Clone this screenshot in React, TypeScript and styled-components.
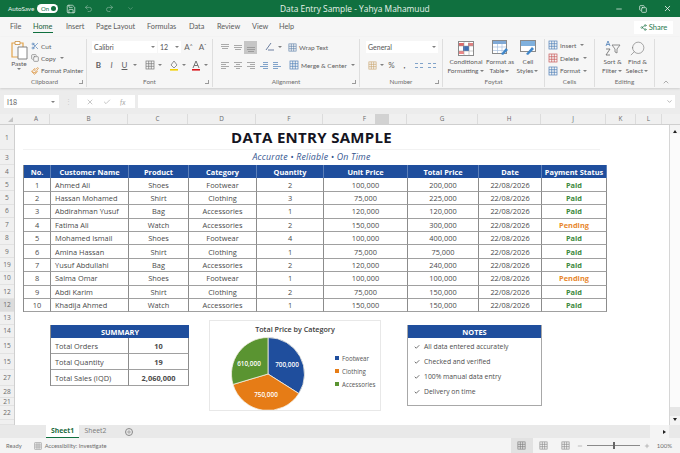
import React from "react";
import styled, { createGlobalStyle } from "styled-components";
import {
  Save, Undo2, Redo2, Minus, X, Share2, Scissors, Copy, Paintbrush, Check, ChevronDown, ChevronUp, Plus, Search,
} from "lucide-react";

const GlobalStyle = createGlobalStyle`
  html, body { margin: 0; padding: 0; background: #fff; }
  body { font-family: "Open Sans", "Liberation Sans", sans-serif; color: #444; }
  * { box-sizing: border-box; }
`;

const uiFont = `"Lato", "Open Sans", sans-serif`;

// Window
const Page = styled.div`
  width: 680px;
  height: 453px;
  overflow: hidden;
  display: flex;
  flex-direction: column;
  background: #ececec;
`;

// Title bar
const TitleBar = styled.div`
  height: 17px;
  flex: none;
  background: #10703f;
  color: #e8f2ec;
  display: flex;
  align-items: center;
  position: relative;
  font-family: ${uiFont};
  font-size: 6.3px;
  padding-left: 8px;
`;

const AutoSaveLabel = styled.span`
  width: 29px;
`;

const Toggle = styled.span`
  width: 21px;
  height: 9px;
  border-radius: 5px;
  background: #fff;
  color: #10703f;
  font-size: 6px;
  display: flex;
  align-items: center;
  justify-content: space-between;
  padding: 0 2px 0 4px;
  margin-right: 7px;
  &::after {
    content: "";
    width: 5px;
    height: 5px;
    border-radius: 50%;
    background: #10703f;
  }
`;

const QuickButton = styled.span<{ $w: number; $dim?: boolean }>`
  width: ${(p) => p.$w}px;
  display: flex;
  align-items: center;
  justify-content: center;
  opacity: ${(p) => (p.$dim ? 0.45 : 1)};
`;

const WindowTitle = styled.span`
  position: absolute;
  left: 280px;
  top: 3px;
  font-family: "Open Sans", sans-serif;
  font-size: 8.4px;
  line-height: 11px;
  white-space: nowrap;
`;

const WindowControls = styled.div`
  margin-left: auto;
  display: flex;
  align-items: center;
  padding-right: 1px;
`;

const WindowButton = styled.span`
  width: 24px;
  display: flex;
  justify-content: center;
`;

// Ribbon tabs
const TabRow = styled.div`
  height: 20px;
  flex: none;
  background: #f6f6f6;
  display: flex;
  align-items: center;
  font-family: ${uiFont};
  font-size: 7.3px;
  color: #5a5a5a;
  padding-left: 10px;
`;

const RibbonTab = styled.span<{ $w: number; $active?: boolean }>`
  width: ${(p) => p.$w}px;
  height: 20px;
  line-height: 20px;
  flex: none;
  white-space: nowrap;
  position: relative;
  color: ${(p) => (p.$active ? "#1f5f3c" : "inherit")};
  &::after {
    content: "";
    display: ${(p) => (p.$active ? "block" : "none")};
    position: absolute;
    left: 0;
    bottom: 4px;
    width: 20px;
    height: 1.5px;
    background: #10703f;
  }
`;

const ShareButton = styled.span`
  margin-left: auto;
  margin-right: 7px;
  width: 39px;
  height: 13px;
  background: #fff;
  color: #2b7a51;
  font-size: 7.6px;
  display: flex;
  align-items: center;
  justify-content: center;
  gap: 2px;
`;

// Ribbon
const Ribbon = styled.div`
  height: 51px;
  flex: none;
  background: #f6f6f6;
  display: flex;
  padding-left: 3px;
  box-shadow: 0 1px 2px #cfcfcf;
  font-family: ${uiFont};
  font-size: 6.5px;
  color: #5c5c5c;
`;

const Group = styled.div<{ $w: number }>`
  width: ${(p) => p.$w}px;
  flex: none;
  display: flex;
  flex-direction: column;
  position: relative;
  border-right: 1px solid #dedede;
  margin: 2px 0 1px;
`;

const GroupBody = styled.div<{ $pl: number; $pt?: number; $row?: boolean; $gap?: number }>`
  flex: 1;
  min-height: 0;
  display: flex;
  flex-direction: ${(p) => (p.$row ? "row" : "column")};
  gap: ${(p) => p.$gap ?? 0}px;
  padding-left: ${(p) => p.$pl}px;
  padding-top: ${(p) => p.$pt ?? 0}px;
`;

const GroupLabel = styled.div`
  height: 10px;
  line-height: 10px;
  text-align: center;
  font-size: 6.4px;
  color: #6e6e6e;
`;

const Launcher = styled.span`
  position: absolute;
  right: 3px;
  bottom: 3px;
  width: 4px;
  height: 4px;
  border-right: 1px solid #9a9a9a;
  border-bottom: 1px solid #9a9a9a;
`;

const ToolRow = styled.div`
  display: flex;
  align-items: center;
  height: 12px;
`;

const Tool = styled.span<{ $ml?: number; $on?: boolean }>`
  width: 13px;
  height: 13px;
  flex: none;
  margin-left: ${(p) => p.$ml ?? 0}px;
  display: flex;
  align-items: center;
  justify-content: center;
  background: ${(p) => (p.$on ? "#c6c6c6" : "transparent")};
  color: #5f5f5f;
  font-size: 8px;
`;

const GrowMark = styled.span`
  font-size: 5px;
  align-self: flex-start;
  margin-top: 2px;
`;

const Caret = styled.span<{ $w?: number }>`
  width: ${(p) => p.$w ?? 8}px;
  flex: none;
  display: flex;
  justify-content: center;
  &::after {
    content: "";
    border-left: 2px solid transparent;
    border-right: 2px solid transparent;
    border-top: 2px solid #808080;
  }
`;

const Field = styled.span<{ $w: number; $ml?: number }>`
  width: ${(p) => p.$w}px;
  height: 12px;
  flex: none;
  margin-left: ${(p) => p.$ml ?? 0}px;
  background: #fff;
  display: flex;
  align-items: center;
  justify-content: space-between;
  padding: 0 1px 0 2px;
  font-size: 7px;
  color: #555;
`;

const InlineTool = styled.span<{ $ml?: number }>`
  display: flex;
  align-items: center;
  gap: 2px;
  flex: none;
  margin-left: ${(p) => p.$ml ?? 0}px;
  white-space: nowrap;
`;

const PasteButton = styled.div`
  width: 24px;
  flex: none;
  display: flex;
  flex-direction: column;
  align-items: center;
  line-height: 8px;
  padding-top: 1px;
`;

const ClipboardList = styled.div`
  display: flex;
  flex-direction: column;
  padding-top: 1px;
`;

const ListRow = styled.div`
  height: 13.4px;
  display: flex;
  align-items: center;
  gap: 2px;
  white-space: nowrap;
`;

const BigButton = styled.div<{ $w: number }>`
  width: ${(p) => p.$w}px;
  flex: none;
  display: flex;
  flex-direction: column;
  align-items: center;
  text-align: center;
  line-height: 9px;
  white-space: nowrap;
`;

const BigIcon = styled.div`
  height: 18px;
  display: flex;
  align-items: center;
`;

const ButtonLine = styled.span`
  display: flex;
  align-items: center;
  height: 9px;
`;

const Collapse = styled.span`
  width: 22px;
  align-self: flex-end;
  display: flex;
  justify-content: center;
  padding-bottom: 2px;
`;

// Formula bar
const FormulaBar = styled.div`
  height: 26px;
  flex: none;
  padding: 7px 5px 6px 4px;
  display: flex;
  font-family: ${uiFont};
  font-size: 7px;
  color: #666;
`;

const NameBox = styled.span`
  width: 55px;
  background: #fff;
  display: flex;
  align-items: center;
  justify-content: space-between;
  padding: 0 3px;
`;

const GripDots = styled.span`
  width: 18px;
  text-align: center;
  color: #ccc;
  line-height: 13px;
`;

const FunctionBox = styled.span`
  width: 58px;
  background: #fff;
  display: flex;
  align-items: center;
  justify-content: space-around;
  color: #aaa;
  padding: 0 5px;
`;

const FormulaInput = styled.span`
  flex: 1;
  margin-left: 3px;
  background: #fff;
  display: flex;
  justify-content: flex-end;
  align-items: center;
  padding-right: 2px;
`;

// Grid
const ColumnHeaderRow = styled.div`
  height: 11px;
  flex: none;
  display: flex;
  background: #f0f0f0;
  border-bottom: 1px solid #cfcfcf;
  padding-right: 10px;
  font-size: 6.4px;
  color: #6a6a6a;
`;

const Corner = styled.span`
  width: 23px;
  flex: none;
  padding: 3px 0 0 8px;
  &::after {
    content: "";
    display: block;
    width: 0;
    height: 0;
    border-left: 5px solid transparent;
    border-bottom: 5px solid #c4c4c4;
  }
`;

const ColumnHead = styled.span<{ $w: number }>`
  width: ${(p) => p.$w}px;
  flex: none;
  position: relative;
  text-align: center;
  line-height: 10px;
  border-right: 1px solid #dcdcdc;
`;

const ColumnBlob = styled.span`
  position: absolute;
  left: 52px;
  top: 0;
  width: 14px;
  height: 10px;
  background: #d2d2d2;
`;

const SheetArea = styled.div`
  height: 300px;
  flex: none;
  display: flex;
`;

const RowHeaders = styled.div`
  width: 15px;
  flex: none;
  background: #f0f0f0;
  border-right: 1px solid #cfcfcf;
  overflow: hidden;
`;

const RowHead = styled.div<{ $on?: boolean }>`
  text-align: center;
  font-size: 6.6px;
  color: #6a6a6a;
  overflow: hidden;
  display: flex;
  align-items: center;
  justify-content: center;
  background: ${(p) => (p.$on ? "#dcdcdc" : "transparent")};
  border-bottom: 1px solid #e2e2e2;
`;

const Sheet = styled.div`
  width: 654px;
  flex: none;
  background: #fff;
  padding-left: 8px;
  color: #444;
`;

const SheetTitle = styled.h1`
  margin: 0;
  width: 577px;
  height: 25px;
  line-height: 25px;
  text-align: center;
  font-size: 15px;
  font-weight: 700;
  letter-spacing: 0.3px;
  color: #15151f;
  font-family: "Open Sans", sans-serif;
  border-bottom: 1px solid #f2f2f2;
`;

const SheetSubtitle = styled.div`
  width: 577px;
  height: 15px;
  line-height: 15px;
  text-align: center;
  font-size: 8.8px;
  font-style: italic;
  letter-spacing: 0.2px;
  color: #34558f;
`;

const DataGrid = styled.div`
  width: 583px;
  display: grid;
  grid-template-columns: 27px 78px 60px 68px 67px 84px 71px 63px 65px;
  grid-auto-rows: 13.4px;
  border-left: 1px solid #8c8c8c;
  font-size: 7.4px;
`;

const HeadCell = styled.div`
  height: 13px;
  background: #1f4e9d;
  color: #fff;
  font-weight: 700;
  font-size: 7.4px;
  display: flex;
  align-items: center;
  justify-content: center;
  white-space: nowrap;
  border-right: 1px solid #5c7fb8;
`;

const Cell = styled.div<{ $left?: boolean; $tone?: string }>`
  display: flex;
  align-items: center;
  justify-content: ${(p) => (p.$left ? "flex-start" : "center")};
  padding-left: ${(p) => (p.$left ? 4 : 0)}px;
  white-space: nowrap;
  border-right: 1px solid #8c8c8c;
  border-bottom: 1px solid #a0a0a0;
  color: ${(p) => p.$tone ?? "#4a4a4a"};
  font-weight: ${(p) => (p.$tone ? 700 : 400)};
`;

const LowerRow = styled.div`
  display: flex;
  align-items: flex-start;
  margin-top: 8px;
  padding-left: 27px;
`;

const SummaryTable = styled.div`
  width: 138px;
  margin-top: 5px;
  flex: none;
  display: grid;
  grid-template-columns: 78px 60px;
  grid-template-rows: 13px repeat(3, 16px);
  border-left: 1px solid #8c8c8c;
  font-size: 7.4px;
`;

const PanelHead = styled.div`
  grid-column: 1 / -1;
  height: 13px;
  background: #1f4e9d;
  color: #fff;
  font-weight: 700;
  font-size: 7.4px;
  display: flex;
  align-items: center;
  justify-content: center;
`;

const SummaryCell = styled.div<{ $bold?: boolean }>`
  display: flex;
  align-items: center;
  justify-content: ${(p) => (p.$bold ? "center" : "flex-start")};
  padding-left: ${(p) => (p.$bold ? 0 : 4)}px;
  border-right: 1px solid #8c8c8c;
  border-bottom: 1px solid #a0a0a0;
  font-weight: ${(p) => (p.$bold ? 700 : 400)};
  color: #4a4a4a;
`;

const ChartCard = styled.div`
  width: 172px;
  height: 91px;
  flex: none;
  margin-left: 21px;
  border: 1px solid #e8e8e8;
  overflow: hidden;
`;

const ChartTitle = styled.div`
  height: 16px;
  line-height: 17px;
  text-align: center;
  font-size: 7.2px;
  font-weight: 600;
  color: #3c3c3c;
`;

const ChartBody = styled.div`
  display: flex;
  align-items: flex-start;
  padding-left: 21px;
`;

const Legend = styled.div`
  margin-left: 30px;
  margin-top: 16px;
  display: flex;
  flex-direction: column;
  gap: 3px;
`;

const LegendItem = styled.div`
  height: 10px;
  display: flex;
  align-items: center;
  gap: 3px;
  font-size: 6.2px;
  color: #555;
`;

const Swatch = styled.span<{ $color: string }>`
  width: 4px;
  height: 4px;
  background: ${(p) => p.$color};
`;

const NotesCard = styled.div`
  width: 135px;
  height: 81px;
  margin-top: 5px;
  margin-left: 26px;
  flex: none;
  border: 1px solid #a8a8a8;
  border-top: none;
`;

const NotesList = styled.ul`
  list-style: none;
  margin: 0;
  padding: 1px 0 0 6px;
`;

const NotesItem = styled.li`
  height: 15px;
  display: flex;
  align-items: center;
  gap: 4px;
  font-size: 6.8px;
  color: #4d4d4d;
`;

const VScroll = styled.div`
  width: 11px;
  flex: none;
  display: flex;
  flex-direction: column;
  background: #e6e6e6;
  border-left: 1px solid #d6d6d6;
`;

const VThumb = styled.div`
  height: 273px;
  background: #fbfbfb;
`;

const ArrowButton = styled.div<{ $dir: "up" | "down" }>`
  height: 9px;
  display: flex;
  align-items: center;
  justify-content: center;
  background: #f4f4f4;
  margin-top: ${(p) => (p.$dir === "down" ? "auto" : 0)};
  &::after {
    content: "";
    border-left: 2px solid transparent;
    border-right: 2px solid transparent;
    border-top: 3px solid ${(p) => (p.$dir === "down" ? "#222" : "transparent")};
    border-bottom: 3px solid ${(p) => (p.$dir === "up" ? "#222" : "transparent")};
  }
`;

// Sheet tabs
const SheetTabs = styled.div`
  height: 13px;
  flex: none;
  background: #e9e9e9;
  display: flex;
  align-items: center;
  padding-left: 46px;
  font-size: 6.8px;
  color: #7a7a7a;
`;

const SheetTab = styled.span<{ $active?: boolean }>`
  width: 33px;
  height: 13px;
  line-height: 12px;
  text-align: center;
  background: ${(p) => (p.$active ? "#fff" : "transparent")};
  color: ${(p) => (p.$active ? "#1c6b40" : "#7a7a7a")};
  font-weight: ${(p) => (p.$active ? 700 : 400)};
  border-bottom: ${(p) => (p.$active ? "1px solid #10703f" : "none")};
`;

const AddSheet = styled.span`
  width: 8px;
  height: 8px;
  margin-left: 13px;
  border-radius: 50%;
  border: 1px solid #8a8a8a;
  display: flex;
  align-items: center;
  justify-content: center;
`;

const HScrollEnd = styled.span`
  margin-left: auto;
  margin-right: 11px;
  width: 19px;
  height: 13px;
  background: #f4f4f4;
  display: flex;
  align-items: center;
  justify-content: flex-end;
  padding-right: 3px;
  &::after {
    content: "";
    border-left: 3px solid #222;
    border-top: 2px solid transparent;
    border-bottom: 2px solid transparent;
  }
`;

// Status bar
const StatusBar = styled.div`
  height: 15px;
  flex: none;
  background: #f4f4f4;
  display: flex;
  align-items: center;
  padding-left: 6px;
  font-family: ${uiFont};
  font-size: 5.8px;
  color: #6d6d6d;
`;

const Accessibility = styled.span`
  margin-left: 12px;
  display: flex;
  align-items: center;
  gap: 3px;
`;

const ViewButton = styled.span<{ $on?: boolean; $first?: boolean }>`
  width: 22px;
  height: 15px;
  margin-left: ${(p) => (p.$first ? "auto" : "0")};
  background: ${(p) => (p.$on ? "#e2e2e2" : "transparent")};
  display: flex;
  align-items: center;
  justify-content: center;
`;

const ZoomSlider = styled.span`
  width: 53px;
  height: 1px;
  margin: 0 4px;
  background: #8a8a8a;
  position: relative;
  &::after {
    content: "";
    position: absolute;
    left: 26px;
    top: -3px;
    width: 2px;
    height: 7px;
    background: #666;
  }
`;

const ZoomText = styled.span`
  margin-left: 7px;
  margin-right: 8px;
  font-size: 6px;
`;

// Drawn icons
type Line = [number, number, number];

function LinesIcon({ lines, color = "#8a8a8a" }: { lines: Line[]; color?: string }) {
  return (
    <svg width="10" height="10" viewBox="0 0 10 10">
      {lines.map(([x1, x2, y]) => (
        <line key={`${x1}${x2}${y}`} x1={x1} x2={x2} y1={y + 0.5} y2={y + 0.5} stroke={color} strokeWidth="0.7" />
      ))}
    </svg>
  );
}

function GridIcon({ size = 10, color = "#777" }: { size?: number; color?: string }) {
  return (
    <svg width={size} height={size} viewBox="0 0 10 10" fill="none" stroke={color} strokeWidth="0.7">
      <rect x="1" y="1" width="8" height="8" />
      <path d="M1 3.7h8M1 6.3h8M3.7 1v8M6.3 1v8" />
    </svg>
  );
}

function PasteIcon() {
  return (
    <svg width="17" height="20" viewBox="0 0 17 20" fill="none">
      <path d="M1 3h11v14H1z" stroke="#e3a34a" strokeWidth="1.2" />
      <path d="M4 1.5h5v3H4z" fill="#fff" stroke="#c98d3c" strokeWidth="0.8" />
      <path d="M7 7h9v12H7z" fill="#fff" stroke="#777" strokeWidth="0.9" />
    </svg>
  );
}

function TableStyleIcon({ variant }: { variant: "cond" | "table" | "cell" }) {
  if (variant === "cond") {
    return (
      <svg width="16" height="15" viewBox="0 0 16 15">
        <rect x="0.5" y="0.5" width="15" height="14" fill="#fff" stroke="#8a8a8a" />
        <rect x="1" y="2" width="5" height="3" fill="#e06a6a" />
        <rect x="5" y="5" width="6" height="5" fill="#3f6fb5" />
        <rect x="1" y="10" width="5" height="3" fill="#e88" />
        <rect x="10" y="2" width="5" height="3" fill="#e08080" />
        <path d="M1 5h14M1 10h14M6 1v13M11 1v13" stroke="#999" strokeWidth="0.5" />
      </svg>
    );
  }
  if (variant === "table") {
    return (
      <svg width="17" height="16" viewBox="0 0 17 16">
        <rect x="0.5" y="0.5" width="14" height="13" fill="#fff" stroke="#8a8a8a" />
        <rect x="1" y="1" width="13" height="3" fill="#7fa9d6" />
        <path d="M1 7h13M1 10.5h13M5.5 4v9M10 4v9" stroke="#a9c2df" strokeWidth="0.7" />
        <path d="M9 14l5-6 2 2-5 5z" fill="#3f86c9" />
      </svg>
    );
  }
  return (
    <svg width="16" height="16" viewBox="0 0 16 16">
      <rect x="0.5" y="0.5" width="15" height="11" fill="#fff" stroke="#8a8a8a" />
      <rect x="1" y="1" width="14" height="5" fill="#7fb0dd" />
      <path d="M6 14l6-7 2 2-6 6z" fill="#3f86c9" />
    </svg>
  );
}

const cols = [
  ["A", 27], ["B", 78], ["C", 60], ["D", 68], ["F", 67], ["F", 84], ["G", 71], ["H", 63], ["J", 65], ["K", 30], ["L", 26],
] as const;

const rowHeads: [string, number, boolean?][] = [
  ["1", 25], ["3", 15], ["4", 13],
  ["5", 13.4], ["5", 13.4], ["6", 13.4], ["7", 13.4], ["8", 13.4], ["9", 13.4], ["19", 13.4], ["10", 13.4], ["12", 13.4], ["12", 13.4, true],
  ["13", 13], ["14", 13], ["15", 16], ["15", 16], ["27", 16], ["28", 12], ["21", 8], ["22", 14], ["", 5],
];

const headers = ["No.", "Customer Name", "Product", "Category", "Quantity", "Unit Price", "Total Price", "Date", "Payment Status"];

const orders = [
  ["1", "Ahmed Ali", "Shoes", "Footwear", "2", "100,000", "200,000", "Paid"],
  ["2", "Hassan Mohamed", "Shirt", "Clothing", "3", "75,000", "225,000", "Paid"],
  ["3", "Abdirahman Yusuf", "Bag", "Accessories", "1", "120,000", "120,000", "Paid"],
  ["4", "Fatima Ali", "Watch", "Accessories", "2", "150,000", "300,000", "Pending"],
  ["5", "Mohamed Ismail", "Shoes", "Footwear", "4", "100,000", "400,000", "Paid"],
  ["6", "Amina Hassan", "Shirt", "Clothing", "1", "75,000", "75,000", "Paid"],
  ["7", "Yusuf Abdullahi", "Bag", "Accessories", "2", "120,000", "240,000", "Paid"],
  ["8", "Salma Omar", "Shoes", "Footwear", "1", "100,000", "100,000", "Pending"],
  ["9", "Abdi Karim", "Shirt", "Clothing", "2", "75,000", "150,000", "Paid"],
  ["10", "Khadija Ahmed", "Watch", "Accessories", "1", "150,000", "150,000", "Paid"],
];

const notes = ["All data entered accurately", "Checked and verified", "100% manual data entry", "Delivery on time"];

const slices = [
  { from: 0, to: 122.3, color: "#1f4e9d" },
  { from: 122.3, to: 253.4, color: "#e67c16" },
  { from: 253.4, to: 360, color: "#5a9431" },
];

function slicePath(from: number, to: number) {
  const point = (deg: number) => {
    const rad = (deg * Math.PI) / 180;
    return `${(37 + 36.5 * Math.sin(rad)).toFixed(2)} ${(37 - 36.5 * Math.cos(rad)).toFixed(2)}`;
  };
  return `M37 37L${point(from)}A36.5 36.5 0 ${to - from > 180 ? 1 : 0} 1 ${point(to)}Z`;
}

export default function App() {
  return (
    <Page>
      <GlobalStyle />
      <TitleBar>
        <AutoSaveLabel>AutoSave</AutoSaveLabel>
        <Toggle>On</Toggle>
        <QuickButton $w={12}><Save size={10} color="#fff" strokeWidth={1.5} /></QuickButton>
        <QuickButton $w={22} $dim><Undo2 size={9} color="#fff" /></QuickButton>
        <QuickButton $w={20} $dim><Redo2 size={9} color="#fff" /></QuickButton>
        <QuickButton $w={22} $dim><ChevronDown size={7} color="#fff" /></QuickButton>
        <WindowTitle>Data Entry Sample - Yahya Mahamuud</WindowTitle>
        <WindowControls>
          <WindowButton><Minus size={8} color="#fff" /></WindowButton>
          <WindowButton><Copy size={8} color="#fff" /></WindowButton>
          <WindowButton><X size={9} color="#fff" /></WindowButton>
        </WindowControls>
      </TitleBar>

      <TabRow>
        <RibbonTab $w={23}>File</RibbonTab>
        <RibbonTab $w={33} $active>Home</RibbonTab>
        <RibbonTab $w={30}>Insert</RibbonTab>
        <RibbonTab $w={51}>Page Layout</RibbonTab>
        <RibbonTab $w={42}>Formulas</RibbonTab>
        <RibbonTab $w={28}>Data</RibbonTab>
        <RibbonTab $w={35}>Review</RibbonTab>
        <RibbonTab $w={27}>View</RibbonTab>
        <RibbonTab $w={20}>Help</RibbonTab>
        <ShareButton><Share2 size={7} />Share</ShareButton>
      </TabRow>

      <Ribbon>
        <Group $w={84}>
          <GroupBody $pl={4} $row>
            <PasteButton>
              <PasteIcon />
              Paste
              <Caret />
            </PasteButton>
            <ClipboardList>
              <ListRow><Scissors size={8} color="#4f7fb8" />Cut</ListRow>
              <ListRow><Copy size={8} color="#777" />Copy<Caret /></ListRow>
              <ListRow><Paintbrush size={8} color="#d98a2b" />Format Painter</ListRow>
            </ClipboardList>
          </GroupBody>
          <GroupLabel>Clipboard</GroupLabel>
          <Launcher />
        </Group>

        <Group $w={126}>
          <GroupBody $pl={5} $pt={2} $gap={6}>
            <ToolRow>
              <Field $w={65}>Calibri<Caret $w={6} /></Field>
              <Field $w={23} $ml={1}>12<Caret $w={6} /></Field>
              <Tool $ml={1}>A<GrowMark>^</GrowMark></Tool>
              <Tool $ml={1}>A<GrowMark>ˇ</GrowMark></Tool>
            </ToolRow>
            <ToolRow>
              <Tool><b>B</b></Tool>
              <Tool><i>I</i></Tool>
              <Tool><u>U</u></Tool>
              <Caret />
              <Tool $ml={4}><GridIcon /></Tool>
              <Caret />
              <Tool $ml={3}>
                <svg width="10" height="11" viewBox="0 0 10 11"><path d="M5 1l3 4-3 3-3-3z" fill="none" stroke="#777" strokeWidth="0.8" /><rect x="1" y="9" width="8" height="1.6" fill="#f2d000" /></svg>
              </Tool>
              <Caret />
              <Tool $ml={1}>
                <svg width="10" height="11" viewBox="0 0 10 11"><path d="M2 8L5 1l3 7M3.2 5.5h3.6" fill="none" stroke="#666" strokeWidth="0.9" /><rect x="1" y="9" width="8" height="1.6" fill="#d9161c" /></svg>
              </Tool>
              <Caret />
            </ToolRow>
          </GroupBody>
          <GroupLabel>Font</GroupLabel>
          <Launcher />
        </Group>

        <Group $w={147}>
          <GroupBody $pl={5} $pt={2} $gap={6}>
            <ToolRow>
              <Tool><LinesIcon lines={[[1, 9, 2], [1, 9, 4], [2, 8, 6]]} /></Tool>
              <Tool><LinesIcon lines={[[1, 9, 3], [1, 9, 5], [2, 8, 7]]} /></Tool>
              <Tool $on><LinesIcon lines={[[1, 9, 5], [1, 9, 7], [2, 8, 9]]} /></Tool>
              <Tool $ml={6}>
                <svg width="10" height="10" viewBox="0 0 10 10"><path d="M1 8L6 1M3 8h6" fill="none" stroke="#6c7fa0" strokeWidth="1" /></svg>
              </Tool>
              <Caret />
              <InlineTool $ml={4}><GridIcon size={9} color="#5c7fa8" />Wrap Text</InlineTool>
            </ToolRow>
            <ToolRow>
              <Tool><LinesIcon lines={[[1, 9, 2], [1, 6, 4], [1, 9, 6], [1, 6, 8]]} /></Tool>
              <Tool><LinesIcon lines={[[1, 9, 2], [3, 7, 4], [1, 9, 6], [3, 7, 8]]} /></Tool>
              <Tool><LinesIcon lines={[[1, 9, 2], [4, 9, 4], [1, 9, 6], [4, 9, 8]]} /></Tool>
              <Tool><LinesIcon lines={[[4, 9, 2], [4, 9, 4], [1, 9, 6], [4, 9, 8]]} color="#4f7fb8" /></Tool>
              <Tool><LinesIcon lines={[[1, 6, 2], [1, 6, 4], [1, 9, 6], [1, 6, 8]]} color="#4f7fb8" /></Tool>
              <InlineTool $ml={6}><GridIcon size={10} color="#4f7fb8" />Merge &amp; Center<Caret /></InlineTool>
            </ToolRow>
          </GroupBody>
          <GroupLabel>Alignment</GroupLabel>
          <Launcher />
        </Group>

        <Group $w={83}>
          <GroupBody $pl={6} $pt={2} $gap={6}>
            <ToolRow><Field $w={72}>General<Caret $w={6} /></Field></ToolRow>
            <ToolRow>
              <Tool><GridIcon size={9} color="#c9a36a" /></Tool>
              <Caret $w={6} />
              <Tool>%</Tool>
              <Tool><b>,</b></Tool>
              <Tool $ml={1}><LinesIcon lines={[[1, 4, 3], [6, 9, 3], [1, 4, 7], [6, 9, 7]]} color="#4f7fb8" /></Tool>
              <Tool><LinesIcon lines={[[1, 4, 3], [6, 9, 3], [1, 4, 7], [6, 9, 7]]} color="#4f7fb8" /></Tool>
            </ToolRow>
          </GroupBody>
          <GroupLabel>Number</GroupLabel>
          <Launcher />
        </Group>

        <Group $w={102}>
          <GroupBody $pl={3} $row>
            <BigButton $w={40}><BigIcon><TableStyleIcon variant="cond" /></BigIcon>Conditional<ButtonLine>Formatting<Caret $w={6} /></ButtonLine></BigButton>
            <BigButton $w={28}><BigIcon><TableStyleIcon variant="table" /></BigIcon>Format as<ButtonLine>Table<Caret $w={6} /></ButtonLine></BigButton>
            <BigButton $w={28}><BigIcon><TableStyleIcon variant="cell" /></BigIcon>Cell<ButtonLine>Styles<Caret $w={6} /></ButtonLine></BigButton>
          </GroupBody>
          <GroupLabel>Foytat</GroupLabel>
        </Group>

        <Group $w={50}>
          <GroupBody $pl={3}>
            <ListRow><GridIcon color="#4f7fb8" />Insert<Caret /></ListRow>
            <ListRow><GridIcon color="#c85a5a" />Delete<Caret /></ListRow>
            <ListRow><GridIcon color="#4f7fb8" />Format<Caret $w={6} /></ListRow>
          </GroupBody>
          <GroupLabel>Cells</GroupLabel>
        </Group>

        <Group $w={60}>
          <GroupBody $pl={5} $row>
            <BigButton $w={25}>
              <BigIcon>
                <svg width="16" height="17" viewBox="0 0 16 17" fill="none"><path d="M1 6l2-5 2 5M1.6 4.5h2.8" stroke="#4f7fb8" strokeWidth="0.8" /><path d="M1 9h4L1 15h4" stroke="#666" strokeWidth="0.8" /><path d="M7 5h8l-3 4v4l-2-1V9z" stroke="#777" strokeWidth="0.8" /></svg>
              </BigIcon>
              Sort &amp;
              <ButtonLine>Filter<Caret $w={6} /></ButtonLine>
            </BigButton>
            <BigButton $w={25}>
              <BigIcon><Search size={17} strokeWidth={0.9} color="#777" style={{ transform: "scaleX(-1)" }} /></BigIcon>
              Find &amp;
              <ButtonLine>Select<Caret $w={6} /></ButtonLine>
            </BigButton>
          </GroupBody>
          <GroupLabel>Editing</GroupLabel>
        </Group>

        <Collapse><ChevronUp size={8} color="#888" /></Collapse>
      </Ribbon>

      <FormulaBar>
        <NameBox>I18<Caret $w={6} /></NameBox>
        <GripDots>⋮</GripDots>
        <FunctionBox>
          <X size={8} />
          <Check size={8} />
          <i>fx</i>
        </FunctionBox>
        <FormulaInput><ChevronDown size={7} color="#888" /></FormulaInput>
      </FormulaBar>

      <ColumnHeaderRow>
        <Corner />
        {cols.map(([name, w], i) => (
          <ColumnHead key={i} $w={w}>
            {name}
            {i === 5 && <ColumnBlob />}
          </ColumnHead>
        ))}
      </ColumnHeaderRow>

      <SheetArea>
        <RowHeaders>
          {rowHeads.map(([label, h, on], i) => (
            <RowHead key={i} $on={on} style={{ height: h }}>{label}</RowHead>
          ))}
        </RowHeaders>
        <Sheet>
          <SheetTitle>DATA ENTRY SAMPLE</SheetTitle>
          <SheetSubtitle>Accurate • Reliable • On Time</SheetSubtitle>
          <DataGrid>
            {headers.map((h) => <HeadCell key={h}>{h}</HeadCell>)}
            {orders.map((o) => (
              <React.Fragment key={o[0]}>
                <Cell>{o[0]}</Cell>
                <Cell $left>{o[1]}</Cell>
                <Cell>{o[2]}</Cell>
                <Cell>{o[3]}</Cell>
                <Cell>{o[4]}</Cell>
                <Cell>{o[5]}</Cell>
                <Cell>{o[6]}</Cell>
                <Cell>22/08/2026</Cell>
                <Cell $tone={o[7] === "Paid" ? "#3d8a3d" : "#e8872c"}>{o[7]}</Cell>
              </React.Fragment>
            ))}
          </DataGrid>
          <LowerRow>
            <SummaryTable>
              <PanelHead>SUMMARY</PanelHead>
              <SummaryCell>Total Orders</SummaryCell><SummaryCell $bold>10</SummaryCell>
              <SummaryCell>Total Quantity</SummaryCell><SummaryCell $bold>19</SummaryCell>
              <SummaryCell>Total Sales (IQD)</SummaryCell><SummaryCell $bold>2,060,000</SummaryCell>
            </SummaryTable>
            <ChartCard>
              <ChartTitle>Total Price by Category</ChartTitle>
              <ChartBody>
                <svg width="74" height="74" viewBox="0 0 74 74">
                  {slices.map((s) => (
                    <path key={s.color} d={slicePath(s.from, s.to)} fill={s.color} stroke="#f4efe2" strokeWidth="0.8" />
                  ))}
                  <g fill="#fff" fontSize="6.4" fontWeight="600" textAnchor="middle">
                    <text x="56" y="29.5">700,000</text>
                    <text x="18" y="29">610,000</text>
                    <text x="35" y="59.5">750,000</text>
                  </g>
                </svg>
                <Legend>
                  <LegendItem><Swatch $color="#1f4e9d" />Footwear</LegendItem>
                  <LegendItem><Swatch $color="#e67c16" />Clothing</LegendItem>
                  <LegendItem><Swatch $color="#5a9431" />Accessories</LegendItem>
                </Legend>
              </ChartBody>
            </ChartCard>
            <NotesCard>
              <PanelHead>NOTES</PanelHead>
              <NotesList>
                {notes.map((n) => (
                  <NotesItem key={n}><Check size={6} color="#444" strokeWidth={3} />{n}</NotesItem>
                ))}
              </NotesList>
            </NotesCard>
          </LowerRow>
        </Sheet>
        <VScroll>
          <ArrowButton $dir="up" />
          <VThumb />
          <ArrowButton $dir="down" />
        </VScroll>
      </SheetArea>

      <SheetTabs>
        <SheetTab $active>Sheet1</SheetTab>
        <SheetTab>Sheet2</SheetTab>
        <AddSheet><Plus size={6} color="#777" /></AddSheet>
        <HScrollEnd />
      </SheetTabs>

      <StatusBar>
        Ready
        <Accessibility><GridIcon size={8} color="#888" />Accessibility: Investigate</Accessibility>
        <ViewButton $first $on><GridIcon size={9} color="#777" /></ViewButton>
        <ViewButton><GridIcon size={9} color="#888" /></ViewButton>
        <ViewButton><GridIcon size={9} color="#888" /></ViewButton>
        <Minus size={6} color="#888" />
        <ZoomSlider />
        <Plus size={6} color="#888" />
        <ZoomText>100%</ZoomText>
      </StatusBar>
    </Page>
  );
}
